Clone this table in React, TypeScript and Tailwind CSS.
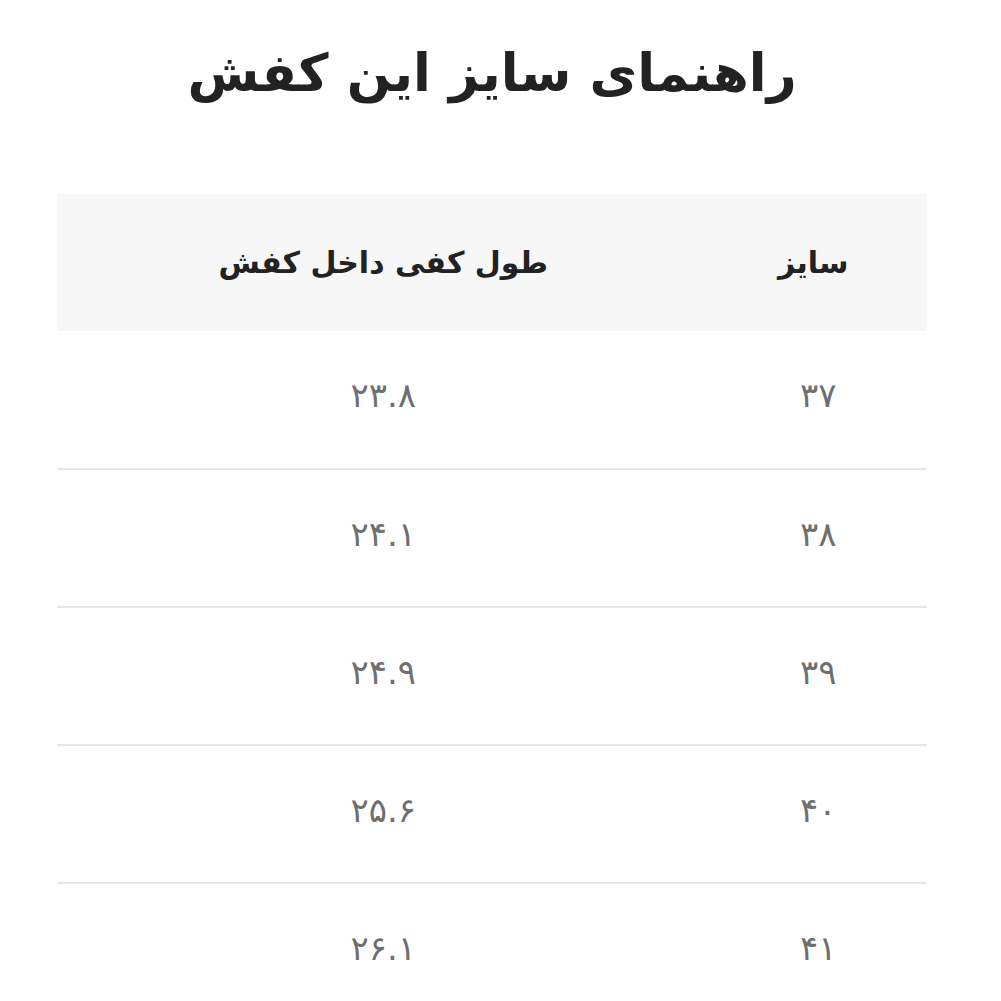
import React from 'react';

const rows: [string, string][] = [
    ['۳۷', '۲۳.۸'],
    ['۳۸', '۲۴.۱'],
    ['۳۹', '۲۴.۹'],
    ['۴۰', '۲۵.۶'],
    ['۴۱', '۲۶.۱'],
];

export default function App() {
    return (
        <div dir="rtl" className="min-h-screen bg-white pl-[57px] pr-[74px]" style={{ fontFamily: '"DejaVu Sans", sans-serif' }}>
            <h1 className="pt-[28px] pb-[76px] text-center text-[52px] font-bold leading-[90px] text-[#222222]">
                راهنمای سایز این کفش
            </h1>

            <table className="w-full border-collapse">
                <thead>
                    <tr className="h-[137px] bg-[#f7f7f7]">
                        <th className="w-1/4 pr-[10px] text-center text-[30px] font-bold text-[#222222]">سایز</th>
                        <th className="text-center text-[30px] font-bold text-[#222222]">طول کفی داخل کفش</th>
                    </tr>
                </thead>
                <tbody>
                    {rows.map(([size, length]) => (
                        <tr key={size} className="h-[138px] border-b-2 border-[#e6e6e6]">
                            <td className="pb-2 text-center text-[34px] tracking-[2px] text-[#6f6f6f]">{size}</td>
                            <td className="pb-2 text-center text-[34px] tracking-[2px] text-[#6f6f6f]">{length}</td>
                        </tr>
                    ))}
                </tbody>
            </table>
        </div>
    );
}
